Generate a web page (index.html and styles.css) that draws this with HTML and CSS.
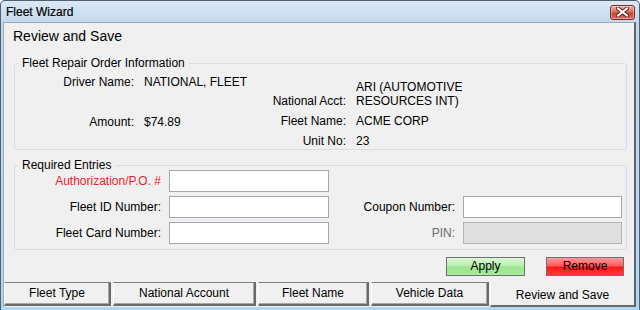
FILE: index.html
```html
<!DOCTYPE html>
<html lang="en">

<head>
  <meta charset="UTF-8">
  <title>Fleet Wizard</title>
  <link rel="stylesheet" href="styles.css">
</head>

<body>
  <div class="window">
    <div class="titlebar">
      <span class="title">Fleet Wizard</span>
      <span class="close">
        <svg width="13" height="10" viewBox="0 0 13 10">
          <path d="M2 1.5 L11 8.5 M11 1.5 L2 8.5" stroke="#5a1f18" stroke-width="4" stroke-linecap="square" />
          <path d="M2 1.5 L11 8.5 M11 1.5 L2 8.5" stroke="#fff" stroke-width="2" stroke-linecap="square" />
        </svg>
      </span>
    </div>

    <div class="client">
      <h1 class="page-title">Review and Save</h1>

      <fieldset class="group group-info">
        <legend>Fleet Repair Order Information</legend>
        <div class="info">
          <dl class="info-col info-left">
            <dt>Driver Name:</dt>
            <dd>NATIONAL, FLEET</dd>
            <dt>Amount:</dt>
            <dd>$74.89</dd>
          </dl>
          <dl class="info-col info-right">
            <dt class="to-bottom">National Acct:</dt>
            <dd>ARI (AUTOMOTIVE<br>RESOURCES INT)</dd>
            <dt>Fleet Name:</dt>
            <dd>ACME CORP</dd>
            <dt>Unit No:</dt>
            <dd>23</dd>
          </dl>
        </div>
      </fieldset>

      <fieldset class="group group-entries">
        <legend>Required Entries</legend>
        <div class="entries">
          <label class="field-label required">Authorization/P.O. #</label>
          <input class="field" type="text">
          <span></span>
          <span></span>

          <label class="field-label">Fleet ID Number:</label>
          <input class="field" type="text">
          <label class="field-label">Coupon Number:</label>
          <input class="field" type="text">

          <label class="field-label">Fleet Card Number:</label>
          <input class="field" type="text">
          <label class="field-label disabled">PIN:</label>
          <input class="field" type="text" disabled>
        </div>
      </fieldset>

      <div class="actions">
        <button class="btn btn-apply">Apply</button>
        <button class="btn btn-remove">Remove</button>
      </div>

      <div class="tabs">
        <div class="tab tab-type">Fleet Type</div>
        <div class="tab tab-account">National Account</div>
        <div class="tab tab-name">Fleet Name</div>
        <div class="tab tab-vehicle">Vehicle Data</div>
        <div class="tab tab-review active">Review and Save</div>
      </div>
    </div>
  </div>
</body>

</html>
```

FILE: styles.css
```css
* {
  box-sizing: border-box;
}

body {
  margin: 0;
  font-family: "Liberation Sans", Arial, sans-serif;
  font-size: 12px;
  color: #000;
}

.window {
  width: 640px;
  height: 310px;
  border: 1px solid #4f6075;
  border-bottom: none;
  border-radius: 5px 5px 0 0;
  background: linear-gradient(#dbe8f5, #c3d8ed 22px, #bcd6ee 60%, #aed8f0);
  display: flex;
  flex-direction: column;
}

.titlebar {
  height: 21px;
  display: flex;
  align-items: center;
  justify-content: space-between;
  padding-left: 5px;
}

.title {
  font-size: 12px;
  line-height: 14px;
  color: #000;
  -webkit-text-stroke: 0.2px #000;
}

.close {
  width: 25px;
  height: 15px;
  margin-right: 4px;
  margin-top: 1px;
  border: 1px solid #7c2a22;
  border-radius: 3px;
  background: linear-gradient(#eeb1a2, #d5705f 45%, #c2452f 55%, #d27060);
  display: grid;
  place-content: center;
  box-shadow: inset 0 0 0 1px rgba(255, 255, 255, 0.35);
}

.close svg {
  display: block;
}

.client {
  flex: 1;
  margin: 0 3px 3px 2px;
  background: #f0f0f0;
  border-top: 1px solid #9aaabb;
  border-left: 1px solid #9aaabb;
  border-right: 2px solid #5c6470;
  display: flex;
  flex-direction: column;
}

.page-title {
  margin: 5px 0 0 9px;
  font-size: 14px;
  font-weight: normal;
  line-height: 16px;
}

.group {
  margin: 0 7px 0 10px;
  padding: 0;
  border: 1px solid #d5dfe5;
  border-radius: 3px;
  min-width: 0;
}

.group legend {
  margin-left: 3px;
  padding: 0 4px;
  line-height: 12px;
}

.group-info {
  margin-top: 13px;
  padding-bottom: 1px;
}

.group-entries {
  margin-top: 9px;
  padding-bottom: 5px;
}

.info {
  display: flex;
  align-items: flex-start;
}

.info-col {
  margin: 0;
  display: grid;
  column-gap: 10px;
  line-height: 14px;
}

.info-col dt {
  text-align: right;
}

.info-col dd {
  margin: 0;
}

.info-left {
  width: 245px;
  grid-template-columns: 119px auto;
  row-gap: 26px;
  margin-top: 6px;
}

.info-right {
  grid-template-columns: 86px auto;
  row-gap: 6px;
  margin-top: 11px;
}

.to-bottom {
  align-self: end;
}

.entries {
  display: grid;
  grid-template-columns: 146px 160px 118px 159px;
  grid-auto-rows: 22px;
  column-gap: 8px;
  row-gap: 4px;
  margin-top: -1px;
}

.field-label {
  align-self: center;
  text-align: right;
  line-height: 14px;
}

.required {
  color: #f01c2a;
}

.disabled {
  color: #6d6d6d;
}

.field {
  height: 22px;
  margin: 0;
  border: 1px solid #a3a8ae;
  background: #fff;
  font: inherit;
  padding: 0 3px;
}

.field:disabled {
  background: #dfdfdf;
  border-color: #b0b3b7;
}

.actions {
  display: flex;
  justify-content: flex-end;
  gap: 21px;
  margin-top: 7px;
  padding-right: 10px;
}

.btn {
  height: 19px;
  margin: 0;
  padding: 0;
  border: 1px solid #707070;
  font: inherit;
  color: #000;
  line-height: 15px;
}

.btn-apply {
  width: 79px;
  background: linear-gradient(#dbf7d6, #b9eeb0 45%, #9be68c 55%, #a9ea9c);
}

.btn-remove {
  width: 78px;
  background: linear-gradient(#ff9a9a, #ff5c5c 45%, #ff1818 55%, #ff3a3a);
}

.tabs {
  margin-top: auto;
  height: 25px;
  display: flex;
}

.tab {
  height: 24px;
  margin-right: 2px;
  background: #f0f0f0;
  border-top: 1px solid #7d7d7d;
  border-left: 1px solid #fff;
  border-right: 2px solid #6a6a6a;
  border-bottom: 2px solid #6a6a6a;
  box-shadow: inset -1px -1px #a8a8a8;
  text-align: center;
  line-height: 20px;
}

.tab-type {
  width: 107px;
}

.tab-account {
  width: 143px;
}

.tab-name {
  width: 111px;
}

.tab-vehicle {
  width: 118px;
  margin-right: 1px;
}

.tab.active {
  flex: 1;
  height: 25px;
  margin-right: 0;
  border-top: none;
  border-right: none;
  box-shadow: none;
  line-height: 26px;
}
```
